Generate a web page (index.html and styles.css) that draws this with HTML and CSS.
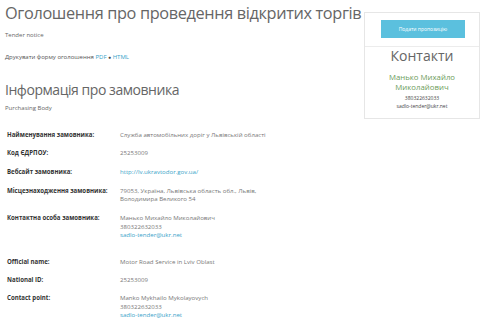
FILE: index.html
```html
<!DOCTYPE html>
<html lang="uk">
<head>
<meta charset="utf-8">
<link rel="stylesheet" href="styles.css">
</head>
<body>
<div class="page">
  <main class="main">
    <h1 class="title">Оголошення про проведення відкритих торгів</h1>
    <p class="sub sub-first">Tender notice</p>
    <p class="print">Друкувати форму оголошення <a href="#">PDF</a> <span class="dot">●</span> <a href="#">HTML</a></p>
    <h2 class="section">Інформація про замовника</h2>
    <p class="sub">Purchasing Body</p>
    <div class="info">
      <div class="label">Найменування замовника:</div>
      <div class="value">Служба автомобільних доріг у Львівській області</div>
      <div class="label">Код ЄДРПОУ:</div>
      <div class="value">25253009</div>
      <div class="label">Вебсайт замовника:</div>
      <div class="value"><a href="#">http://lv.ukravtodor.gov.ua/</a></div>
      <div class="label">Місцезнаходження замовника:</div>
      <div class="value">79053, Україна, Львівська область обл., Львів,<br>Володимира Великого 54</div>
      <div class="label">Контактна особа замовника:</div>
      <div class="value">Манько Михайло Миколайович<br>380322632033<br><a href="#">sadlo-tender@ukr.net</a></div>
    </div>
    <div class="info info-en">
      <div class="label">Official name:</div>
      <div class="value">Motor Road Service in Lviv Oblast</div>
      <div class="label">National ID:</div>
      <div class="value">25253009</div>
      <div class="label">Contact point:</div>
      <div class="value">Manko Mykhailo Mykolayovych<br>380322632033<br><a href="#">sadlo-tender@ukr.net</a></div>
    </div>
  </main>
  <aside class="side">
    <div class="card">
      <div class="card-top">
        <button class="btn" type="button">Подати пропозицію</button>
      </div>
      <div class="card-body">
        <h3 class="card-title">Контакти</h3>
        <p class="contact-name">Манько Михайло<br>Миколайович</p>
        <p class="contact-small">380322632033<br>sadlo-tender@ukr.net</p>
      </div>
    </div>
  </aside>
</div>
</body>
</html>
```

FILE: styles.css
```css
* { box-sizing: border-box; }
html, body { margin: 0; padding: 0; background: #fff; }
body {
  font-family: "Open Sans", "Liberation Sans", sans-serif;
  color: #666;
  width: 480px;
  height: 321px;
  overflow: hidden;
}
a { color: #3aa3c9; text-decoration: none; }
.page {
  display: flex;
  align-items: flex-start;
  padding: 2px 0 0 5px;
}
.main { width: 359px; flex: none; }
.title {
  margin: 0;
  font-size: 16.3px;
  font-weight: 400;
  letter-spacing: -0.35px;
  line-height: 22px;
  color: #666;
  white-space: nowrap;
}
.sub {
  margin: 4px 0 0;
  font-size: 6px;
  line-height: 9px;
  color: #666;
}
.sub-first { margin-top: 7px; }
.print {
  margin: 13px 0 0;
  font-size: 6px;
  line-height: 9px;
  color: #555;
}
.dot { color: #444; font-size: 5px; }
.section {
  margin: 18px 0 0;
  font-size: 14px;
  font-weight: 400;
  letter-spacing: -0.45px;
  line-height: 20px;
  color: #666;
}
.info {
  margin-top: 17.5px;
  display: grid;
  grid-template-columns: 115px 1fr;
  row-gap: 10px;
  font-size: 6.1px;
  line-height: 8.7px;
}
.info-en { margin-top: 17.5px; row-gap: 9.5px; }
.label {
  padding-left: 2px;
  font-weight: 700;
  color: #333;
}
.value { color: #777; }
.side { flex: none; margin-top: 10px; width: 116px; }
.card {
  border: 1px solid #e6e6e6;
  background: #fff;
}
.card-top {
  display: flex;
  justify-content: center;
  padding: 7px 0 8px 2px;
  border-bottom: 1px solid #ececec;
}
.btn {
  width: 84px;
  height: 18px;
  border: 0;
  background: #5bc0de;
  color: #fff;
  font-family: "Open Sans", "Liberation Sans", sans-serif;
  font-size: 5px;
  padding: 0;
}
.card-body {
  text-align: center;
  padding: 0 0 7px;
}
.card-title {
  margin: 0;
  font-size: 14px;
  font-weight: 400;
  line-height: 17px;
  color: #666;
}
.contact-name {
  margin: 8px 0 0;
  font-size: 7.8px;
  line-height: 10px;
  color: #6d9c5a;
}
.contact-small {
  margin: 2px 0 0;
  font-size: 5px;
  line-height: 8.4px;
  color: #444;
}
```
